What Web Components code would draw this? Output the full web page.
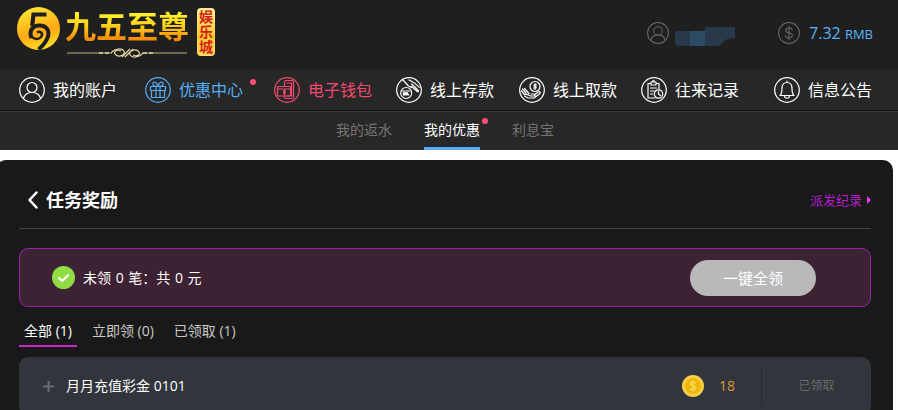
<!DOCTYPE html>
<html lang="zh-CN">
<head>
<meta charset="utf-8">
<title>任务奖励</title>
<style>
html{background:#fff}
body{margin:0;height:100vh;overflow:hidden;font:14px/20px "Open Sans","Noto Sans CJK SC",sans-serif;color:#fff}
</style>
</head>
<body>
<rewards-app></rewards-app>
<script>
const reset = `*{box-sizing:border-box}a{color:inherit;text-decoration:none}button{font:inherit;color:inherit;border:0;background:none;padding:0;cursor:pointer}`;
function define(name, css, render) {
  customElements.define(name, class extends HTMLElement {
    connectedCallback() {
      if (this.shadowRoot) return;
      const t = document.createElement('template');
      t.innerHTML = `<style>${reset}${css}</style>${render(this)}`;
      this.attachShadow({mode: 'open'}).append(t.content.cloneNode(true));
    }
  });
}

const icons = {
  user: '<circle cx="13" cy="10.5" r="5"/><path d="M4.5 21.5c1-4 4-6 8.500-6s7.500 2 8.500 6"/>',
  gift: '<path d="M5.500 9.500h15v4h-15zM6.500 13.500h13v7h-13zM11 9.500v11M15 9.500v11M13 9.500C9 9.500 7 8 8 6s4-1 5 3.500c1-4.500 4-5.500 5-3.500s-1 3.500-5 3.500"/>',
  wallet: '<path d="M10.500 9V5q0-1.500 1.500-1.500h6q1.500 0 1.500 1.500v15q0 1.500-1.500 1.500h-6q-1.500 0-1.500-1.500v-1M13 6h4.500v13H13"/><rect x="3.500" y="9.500" width="13" height="9.500" rx="1"/><path d="M3.500 12h13M11.500 13.800c-2-.8-2.600 1-1.200 1.200 1.700.2 1.300 2-.8 1.400M10.500 13v5"/>',
  deposit: '<circle cx="10.200" cy="16" r="5.500"/><path d="M6.500 14h7.500M7.500 18v-2.500l1.200 2.500v-2.500l1.300 2.500v-2.500l1.200 2.500v-2.500l1.300 2.500M7 3l5.500 6c2 1.500 4 1.200 5.200 2.200l3.500 3.300c1 .8 1.700-.2 1-1l-3-3M13 3c4 2 7 3 10.500 7.500M14.500 9.500l2.500.5M15.500 7l4.500 4"/>',
  withdraw: '<circle cx="16" cy="9.500" r="5"/><path d="M17.500 8c-2.500-1-3.300.9-1.500 1.500 2.200.6 1.200 2.500-1.500 1.500M16 6.500v6M2.500 14l3 3.500 2-.2c1.500 0 2.500 1.700 4.500 1.700h3c1.500 0 1.500-2 0-2h-3M15.500 17.500l4-2.500c1.500-.8 2.500.7 1.200 1.700L15 21H9l-3.500-2M3.500 12l3.500 4M5.500 11.500l4.500 5"/>',
  record: '<path d="M14 21H7V6.500h3M15 6.500h3V12M10 5h5v3h-5zM11.500 5q0-1.500 1-1.500t1 1.500M9.500 11h6M9.500 14h3.500M9.500 17h2.500"/><circle cx="17.500" cy="17" r="4.200"/><path d="M17.500 14.500V17l2 1.500"/>',
  bell: '<path d="M13 4v1.500M6 18.500c2-2 2-3.500 2-7C8 7.500 10 5.500 13 5.500s5 2 5 6c0 3.500 0 5 2 7zM10.500 19c.3 3 4.700 3 5 0"/>',
  dollar: '<path d="M17 9.500c-.5-1.500-2-2.300-4-2.300-5 0-5 5 0 5.700 5.500.8 5 6 0 6-2.300 0-4-1-4.300-2.700M13 5v16"/>'
};
define('round-icon', `:host{display:block;flex:none;width:26px;height:26px}:host([small]){width:22px;height:22px}svg{display:block;width:100%;height:100%;fill:none;stroke:currentColor;stroke-width:1.200;stroke-linecap:round;stroke-linejoin:round}`,
  e => `<svg viewBox="0 0 26 26" aria-hidden="true"><circle cx="13" cy="13" r="12.300"/>${icons[e.getAttribute('name')]}</svg>`);

define('site-logo', `
:host{display:flex;align-items:flex-start;gap:5px;padding:7px 0 0 17px}
.mark{width:43px;height:43px}
.mark svg,.flourish{display:block}
.flourish{margin-top:4px}
.name{font:700 31px/36px "Noto Sans CJK SC",sans-serif;background:linear-gradient(#fff02a 20%,#ffd31b 50%,#f68b08 90%);-webkit-background-clip:text;background-clip:text;color:transparent}
.tag{width:18px;height:48px;margin:1px 0 0 3px;padding:1px 2px;border-radius:4px;background:linear-gradient(#fff39a,#ffc62c 60%,#ffdf65);color:#d32013;font:700 14px/15px "Noto Sans CJK SC",sans-serif;word-break:break-all}`,
() => `<div class="mark"><svg width="43" height="43" viewBox="0 0 43 43"><defs><linearGradient id="g" x1=".3" y1="0" x2=".6" y2="1"><stop stop-color="#ffe833"/><stop offset=".6" stop-color="#ffa914"/><stop offset="1" stop-color="#ffe12c"/></linearGradient></defs><circle cx="21.500" cy="21.500" r="21.500" fill="url(#g)"/><g fill="none" stroke="#1f1f1f"><path stroke-width="4.200" d="M29.500 7.500H16.500L15.200 19"/><path stroke-width="4" d="M14.500 31C11.500 23 16 18.500 22.500 18.500c7.500 0 10 5.500 8.500 11-1.500 5-5.500 9.500-9.500 13"/><path stroke-width="2.500" d="M20 25.500c4-2 6.500 1.500 4 4.500-2.500 2.800-7 2.500-9.500-.5"/></g></svg></div>
<div><div class="name">九五至尊</div><svg class="flourish" width="124" height="12" viewBox="0 0 124 12" fill="none" stroke="#e6d6a0"><path d="M2 6h45M77 6h45" stroke-width=".8"/><path d="M34 6h12M78 6h12" stroke-width="1.600" stroke-dasharray="4 2"/><path d="M46 6C50 1 57 1 59 4s-4 7-8 4 1-6 5-4M78 6C74 11 67 11 65 8s4-7 8-4-1 6-5 4M57 10l8-8M60 10l8-8" stroke-width="1.200"/></svg></div>
<div class="tag">娱乐城</div>`);

define('site-header', `
:host{display:flex;justify-content:space-between;height:70px;background:#1f1f1f}
.account{display:flex;align-items:center;height:66px;padding-right:25px;color:#686868}
.mask{display:block;width:60px;height:19px;margin:7px 43px 0 6px}
.balance{margin-left:9px;color:#5bb4f8;font-size:16px;line-height:24px}
.balance small{font-size:13px}`,
() => `<site-logo></site-logo><div class="account"><round-icon small name="user"></round-icon><svg class="mask" viewBox="0 0 60 19" aria-hidden="true"><path fill="#27394a" d="M0 5q0-1 1-1h14v15H5Q0 19 0 15zM30 0h30v11q-9 0-13 5-1 3-8 3h-9z"/><path fill="#2c4c66" d="M15 4h15v15H15z"/></svg><round-icon small name="dollar"></round-icon><span class="balance">7.32 <small>RMB</small></span></div>`);

define('nav-item', `
:host{display:flex}
a{position:relative;display:flex;align-items:center;gap:8px;font-size:16px;line-height:24px;white-space:nowrap}
:host([tone=blue]) a{color:#55aef5}:host([tone=pink]) a{color:#f44a70}
i{position:absolute;right:-13px;top:2px;width:6px;height:6px;border-radius:50%;background:#ff4f78}`,
e => `<a href="#"><round-icon name="${e.getAttribute('icon')}"></round-icon><span><slot></slot></span>${e.hasAttribute('dot') ? '<i></i>' : ''}</a>`);

define('main-nav', `
:host{display:block;background:#272727;border-bottom:1px solid #151515}
nav{display:grid;grid-template-columns:126fr 129fr 122fr 123fr 122fr 133fr 98px;align-items:center;height:40px;padding:0 26px 0 19px}`,
() => `<nav><nav-item icon="user">我的账户</nav-item><nav-item icon="gift" tone="blue" dot>优惠中心</nav-item><nav-item icon="wallet" tone="pink">电子钱包</nav-item><nav-item icon="deposit">线上存款</nav-item><nav-item icon="withdraw">线上取款</nav-item><nav-item icon="record">往来记录</nav-item><nav-item icon="bell">信息公告</nav-item></nav>`);

define('sub-nav', `
:host{display:block;background:#272727;border-top:1px solid #3a3a3a}
nav{display:flex;justify-content:center;gap:32px;height:38px;padding-right:8px}
a{position:relative;line-height:36px;color:#757575}
a[aria-current]{color:#fff;border-bottom:3px solid #55aef5}
i{position:absolute;right:-8px;top:6px;width:6px;height:6px;border-radius:50%;background:#ff4f78}`,
() => `<nav><a href="#">我的返水</a><a href="#" aria-current="page">我的优惠<i></i></a><a href="#">利息宝</a></nav>`);

define('panel-title', `
:host{display:flex;align-items:center;justify-content:space-between;height:69px;padding-top:11px;border-bottom:1px solid #444}
.back{display:flex;align-items:center;gap:8px;padding-left:9px}
h1{margin:0;font-size:18px;line-height:24px;font-weight:700}
.log{display:flex;align-items:center;gap:5px;font-size:13px;color:#b51bcb}
button svg{display:block}`,
() => `<div class="back"><button aria-label="返回"><svg width="10" height="18" viewBox="0 0 10 18" fill="none" stroke="#fff" stroke-width="2.500" stroke-linecap="round" stroke-linejoin="round"><path d="M8.500 1.500 1.500 9l7 7.500"/></svg></button><h1>任务奖励</h1></div><a class="log" href="#">派发纪录<svg width="4" height="8" viewBox="0 0 4 8"><path d="M0 0l4 4-4 4z" fill="#e83cf0"/></svg></a>`);

define('claim-bar', `
:host{display:flex;align-items:center;justify-content:space-between;margin-top:19px;height:59px;padding:0 54px 0 32px;border:1px solid #9c22a4;border-radius:9px;background:#3c2233}
p{display:flex;align-items:center;gap:8px;margin:0}
b{font-weight:400;margin:0 1px}
svg{display:block}
.all{width:126px;height:36px;border-radius:18px;background:#b9b9b9;font-size:15px}`,
() => `<p><svg width="23" height="23" viewBox="0 0 23 23"><circle cx="11.500" cy="11.500" r="11.500" fill="#8fdd43"/><path d="M7 12l3.200 3 6-6" fill="none" stroke="#fff" stroke-width="2" stroke-linecap="round" stroke-linejoin="round"/></svg><span>未领 <b>0</b> 笔：共 <b>0</b> 元</span></p><button class="all">一键全领</button>`);

define('filter-tabs', `
:host{display:flex;gap:10px;margin-top:12px;height:28px}
button{padding:0 5px 4px;color:#c9c9c9}
button[aria-pressed=true]{color:#fff;padding-bottom:2px;border-bottom:2px solid #cb27c4}`,
() => `<button aria-pressed="true">全部 (1)</button><button aria-pressed="false">立即领 (0)</button><button aria-pressed="false">已领取 (1)</button>`);

define('reward-row', `
:host{display:flex;align-items:center;margin-top:10px;height:58px;padding-left:24px;border-radius:9px;background:#32353c}
.plus{display:block;margin-right:12px}
.amount{display:flex;align-items:center;gap:15px;margin-left:auto;margin-right:26px;color:#d99a32}
.state{width:110px;height:40px;line-height:40px;text-align:center;font-size:12px;color:#6a6a6c;border-left:1px solid #25282e}`,
() => `<button aria-label="展开"><svg class="plus" width="11" height="11" viewBox="0 0 11 11"><path d="M5.500 0v11M0 5.500h11" stroke="#6b6e73" stroke-width="2"/></svg></button><span><slot></slot></span><span class="amount"><svg width="22" height="22" viewBox="0 0 22 22"><circle cx="11" cy="11" r="11" fill="#f8ce49"/><circle cx="11" cy="11" r="8" fill="#edb80d"/><path d="M13.800 8.200C12 6.500 8.300 7 8.300 9c0 2.500 5.600 1.500 5.600 4.100 0 2-4 2.500-5.900.6M11 5.500v11" fill="none" stroke="#ffdc65" stroke-width="1.200"/></svg>18</span><span class="state">已领取</span>`);

define('rewards-app', `
:host{display:block}
main{margin:10px 5px 0 -4px;padding:0 22px 20px 23px;border-radius:10px;background:#191919}`,
() => `<site-header></site-header><main-nav></main-nav><sub-nav></sub-nav><main><panel-title></panel-title><claim-bar></claim-bar><filter-tabs></filter-tabs><reward-row>月月充值彩金 0101</reward-row></main>`);
</script>
</body>
</html>
